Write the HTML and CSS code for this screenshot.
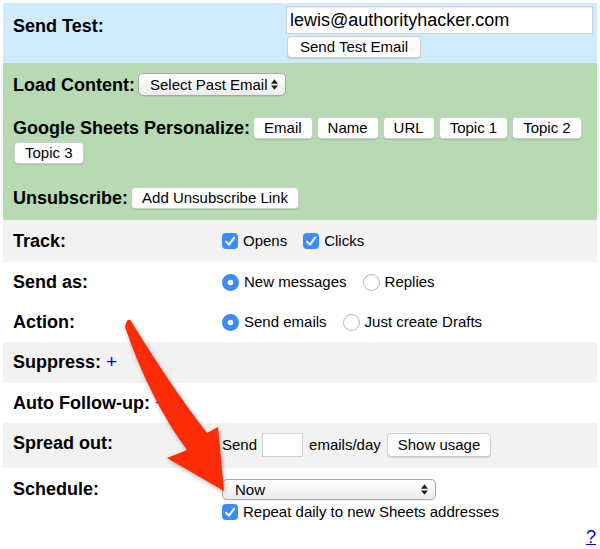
FILE: index.html
```html
<!DOCTYPE html>
<html>
<head>
<meta charset="utf-8">
<link rel="stylesheet" href="styles.css">
</head>
<body>
<div class="page">
  <section class="test">
    <div class="test-label">Send Test:</div>
    <div class="test-fields">
      <input class="email" type="text" value="lewis@authorityhacker.com">
      <button class="btn btn-send">Send Test Email</button>
    </div>
  </section>

  <section class="content">
    <div class="line">
      <span class="lbl">Load Content:</span>
      <span class="select past">Select Past Email<svg class="arrows" viewBox="0 0 8 12"><polygon points="0,5 4,0 8,5"/><polygon points="0,7 4,12 8,7"/></svg></span>
    </div>
    <div class="line wrap l2">
      <span class="lbl">Google Sheets Personalize:</span>
      <button class="btn">Email</button>
      <button class="btn">Name</button>
      <button class="btn">URL</button>
      <button class="btn">Topic 1</button>
      <button class="btn">Topic 2</button>
      <button class="btn topic3">Topic 3</button>
    </div>
    <div class="line l3">
      <span class="lbl">Unsubscribe:</span>
      <button class="btn">Add Unsubscribe Link</button>
    </div>
  </section>

  <div class="row gray r-track">
    <div class="lbl">Track:</div>
    <div class="val">
      <span class="opt"><svg class="cb" viewBox="0 0 16 16"><rect width="16" height="16" rx="4"/><path d="M4 8.6 L7 11.6 L12.2 4.6"/></svg>Opens</span>
      <span class="opt"><svg class="cb" viewBox="0 0 16 16"><rect width="16" height="16" rx="4"/><path d="M4 8.6 L7 11.6 L12.2 4.6"/></svg>Clicks</span>
    </div>
  </div>

  <div class="row">
    <div class="lbl">Send as:</div>
    <div class="val">
      <span class="opt"><svg class="rb" viewBox="0 0 17 17"><circle class="on" cx="8.5" cy="8.5" r="8.5"/><circle class="dot" cx="8.5" cy="8.5" r="2.8"/></svg>New messages</span>
      <span class="opt"><svg class="rb" viewBox="0 0 17 17"><circle class="off" cx="8.5" cy="8.5" r="8"/></svg>Replies</span>
    </div>
  </div>

  <div class="row">
    <div class="lbl">Action:</div>
    <div class="val">
      <span class="opt"><svg class="rb" viewBox="0 0 17 17"><circle class="on" cx="8.5" cy="8.5" r="8.5"/><circle class="dot" cx="8.5" cy="8.5" r="2.8"/></svg>Send emails</span>
      <span class="opt"><svg class="rb" viewBox="0 0 17 17"><circle class="off" cx="8.5" cy="8.5" r="8"/></svg>Just create Drafts</span>
    </div>
  </div>

  <div class="row gray r-suppress">
    <div class="lbl">Suppress: <span class="plus">+</span></div>
  </div>

  <div class="row">
    <div class="lbl">Auto Follow-up: <span class="plus">+</span></div>
  </div>

  <div class="row gray r-spread">
    <div class="lbl">Spread out:</div>
    <div class="val spread">
      <span>Send</span>
      <input class="perday" type="text" value="">
      <span>emails/day</span>
      <button class="btn btn-usage">Show usage</button>
    </div>
  </div>

  <div class="row r-schedule">
    <div class="lbl">Schedule:</div>
    <div class="val sched">
      <span class="select now">Now<svg class="arrows" viewBox="0 0 8 12"><polygon points="0,5 4,0 8,5"/><polygon points="0,7 4,12 8,7"/></svg></span>
      <span class="opt repeat"><svg class="cb" viewBox="0 0 16 16"><rect width="16" height="16" rx="4"/><path d="M4 8.6 L7 11.6 L12.2 4.6"/></svg>Repeat daily to new Sheets addresses</span>
    </div>
  </div>

  <div class="help"><a href="#">?</a></div>

  <svg class="arrow" viewBox="0 0 600 549">
    <path d="M125 327 Q150 400 187 450 L167 458 L224 491 L218 427 L207 433 Q170 385 131 321 Q127 317 125 327 Z"/>
  </svg>
</div>
</body>
</html>
```

FILE: styles.css
```css
* { box-sizing: border-box; }

body {
  margin: 0;
  font-family: "Liberation Sans", Arial, Helvetica, sans-serif;
  color: #000;
  background: #fff;
}

.page {
  position: relative;
  margin: 3px 3px 0;
  width: 594px;
  height: 546px;
}

/* ---------- Send test (blue) ---------- */
.test {
  display: flex;
  height: 60px;
  padding: 3px 4px 5px 10px;
  background: #cfebfd;
}
.test-label {
  width: 273px;
  margin-top: 10px;
  font-weight: bold;
  font-size: 18px;
  line-height: 20px;
}
.test-fields {
  display: flex;
  flex-direction: column;
  align-items: flex-start;
  gap: 2px;
}
.email {
  width: 307px;
  height: 28px;
  margin: 0;
  padding: 0 3px;
  border: 1px solid #cfcfcf;
  box-shadow: inset 0 1px 1px rgba(0,0,0,0.08);
  background: #fff;
  font-family: inherit;
  font-size: 18px;
  color: #000;
  outline: none;
}

/* ---------- buttons ---------- */
.btn {
  height: 22px;
  margin: 0;
  padding: 0 10px;
  border: 1px solid #cdcdcd;
  border-radius: 4px;
  background: #fff;
  box-shadow: 0 1px 1px rgba(0,0,0,0.12);
  font-family: inherit;
  font-size: 15px;
  line-height: 20px;
  color: #000;
  white-space: nowrap;
}
.btn-send {
  margin-left: 1px;
  padding: 0 12px;
}
.btn-usage {
  height: 24px;
  padding: 0 10px;
}

/* ---------- content (green) ---------- */
.content {
  display: flex;
  flex-direction: column;
  padding: 10px 10px 11px;
  background: #b8dab2;
}
.line {
  display: flex;
  align-items: center;
  flex-wrap: wrap;
  gap: 3px 4px;
}
.line .lbl {
  font-weight: bold;
  font-size: 18px;
  line-height: 20px;
  margin-right: -1px;
}
.l2 { margin-top: 21px; }
.l3 { margin-top: 23px; }
.topic3 { margin-left: 1px; }

/* ---------- selects ---------- */
.select {
  display: inline-flex;
  align-items: center;
  justify-content: space-between;
  border: 1px solid #a8a8a8;
  border-radius: 5px;
  background: linear-gradient(#ffffff, #ececec);
  box-shadow: 0 1px 1px rgba(0,0,0,0.06);
  font-size: 15px;
  line-height: 18px;
  color: #000;
}
.past {
  width: 148px;
  height: 23px;
  padding: 0 7px 0 11px;
}
.now {
  width: 214px;
  height: 21px;
  padding: 0 7px 0 12px;
}
.arrows {
  width: 7px;
  height: 11px;
  fill: #222;
}

/* ---------- rows ---------- */
.row {
  display: flex;
  padding: 10px 10px;
}
.gray { background: #f2f2f2; }
.row .lbl {
  flex-shrink: 0;
  width: 209px;
  font-weight: bold;
  font-size: 18px;
  line-height: 20px;
  white-space: nowrap;
}
.r-track { padding: 11px 10px; }
.r-suppress { padding: 10px 10px 11px; }
.r-spread { padding: 10px 10px 11px; }
.r-schedule { padding: 11px 10px 0; }

.val {
  display: flex;
  align-items: center;
  font-size: 15px;
  line-height: 20px;
}
.opt {
  display: inline-flex;
  align-items: center;
  gap: 5px;
  margin-right: 16px;
}

.cb { width: 16px; height: 16px; }
.cb rect { fill: #3b8cf5; }
.cb path {
  fill: none;
  stroke: #fff;
  stroke-width: 2;
  stroke-linecap: round;
  stroke-linejoin: round;
}
.rb { width: 17px; height: 17px; }
.rb .on { fill: #3b8cf5; }
.rb .dot { fill: #fff; }
.rb .off { fill: #fff; stroke: #b3b3b3; stroke-width: 1; }

.plus {
  color: #0000ee;
  font-weight: normal;
  font-size: 19px;
}

.spread {
  height: 24px;
  gap: 0;
}
.perday {
  width: 41px;
  height: 24px;
  margin: 0 6px 0 5px;
  padding: 0 3px;
  border: 1px solid #cfcfcf;
  background: #fff;
  font-family: inherit;
  font-size: 15px;
  outline: none;
}
.spread .btn-usage { margin-left: 6px; }

.sched {
  flex-direction: column;
  align-items: flex-start;
}
.repeat {
  margin-top: 3px;
  line-height: 17px;
}

/* ---------- help ---------- */
.help {
  margin-top: 7px;
  padding-right: 1px;
  text-align: right;
  font-size: 18px;
  line-height: 20px;
}
.help a {
  color: #0000ee;
  text-decoration: underline;
}

/* ---------- annotation arrow ---------- */
.arrow {
  position: absolute;
  left: -3px;
  top: -3px;
  width: 600px;
  height: 549px;
  pointer-events: none;
  filter: drop-shadow(1px 2px 2px rgba(0,0,0,0.3));
}
.arrow path { fill: #fd2c07; }
```
